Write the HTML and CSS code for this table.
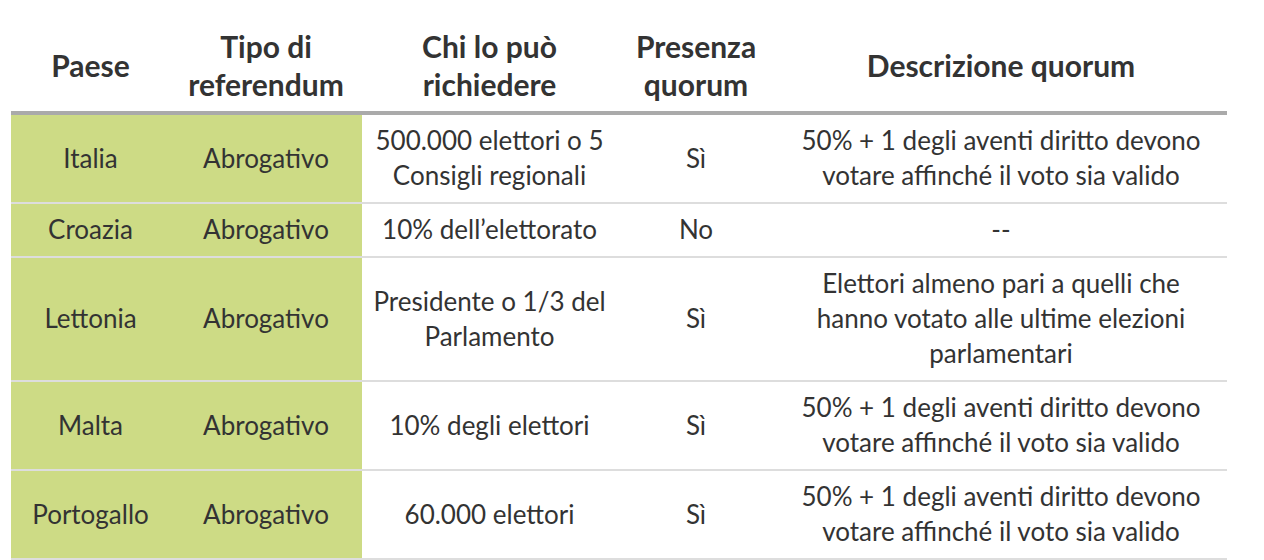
FILE: index.html
```html
<!DOCTYPE html>
<html lang="it">
<head>
<meta charset="utf-8">
<link rel="stylesheet" href="styles.css">
</head>
<body>
<div class="wrap">
<table class="ref">
  <colgroup>
    <col class="c1"><col class="c2"><col class="c3"><col class="c4"><col class="c5">
  </colgroup>
  <thead>
    <tr>
      <th>Paese</th>
      <th>Tipo di referendum</th>
      <th>Chi lo può richiedere</th>
      <th>Presenza quorum</th>
      <th>Descrizione quorum</th>
    </tr>
  </thead>
  <tbody>
    <tr>
      <td class="hl">Italia</td>
      <td class="hl">Abrogativo</td>
      <td>500.000 elettori o 5 Consigli regionali</td>
      <td>Sì</td>
      <td class="wide">50% + 1 degli aventi diritto devono votare affinché il voto sia valido</td>
    </tr>
    <tr>
      <td class="hl">Croazia</td>
      <td class="hl">Abrogativo</td>
      <td>10% dell’elettorato</td>
      <td>No</td>
      <td class="wide">--</td>
    </tr>
    <tr>
      <td class="hl">Lettonia</td>
      <td class="hl">Abrogativo</td>
      <td>Presidente o 1/3 del Parlamento</td>
      <td>Sì</td>
      <td class="wide">Elettori almeno pari a quelli che hanno votato alle ultime elezioni parlamentari</td>
    </tr>
    <tr>
      <td class="hl">Malta</td>
      <td class="hl">Abrogativo</td>
      <td>10% degli elettori</td>
      <td>Sì</td>
      <td class="wide">50% + 1 degli aventi diritto devono votare affinché il voto sia valido</td>
    </tr>
    <tr>
      <td class="hl">Portogallo</td>
      <td class="hl">Abrogativo</td>
      <td>60.000 elettori</td>
      <td>Sì</td>
      <td class="wide">50% + 1 degli aventi diritto devono votare affinché il voto sia valido</td>
    </tr>
  </tbody>
</table>
</div>
</body>
</html>
```
FILE: styles.css
```css
html, body {
  margin: 0;
  padding: 0;
  background: #fff;
}
.wrap {
  padding: 19px 37px 0 11px;
}
.ref {
  width: 1216px;
  border-collapse: collapse;
  table-layout: fixed;
  font-family: Lato, "Liberation Sans", sans-serif;
  color: #333;
}
.c1 { width: 159px; }
.c2 { width: 192px; }
.c3 { width: 255px; }
.c4 { width: 158px; }
.c5 { width: 452px; }
.ref th {
  font-size: 30px;
  font-weight: 700;
  line-height: 38px;
  padding: 8px 6px 8px;
  text-align: center;
  vertical-align: middle;
  border-bottom: 4px solid #aaa;
}
.ref td {
  font-size: 26px;
  line-height: 35px;
  padding: 8px 8px 9px;
  text-align: center;
  vertical-align: middle;
  border-bottom: 2px solid #ddd;
}
.ref td.wide {
  padding-left: 14px;
  padding-right: 14px;
}
.ref td.hl {
  background: #cddb85;
}
```
